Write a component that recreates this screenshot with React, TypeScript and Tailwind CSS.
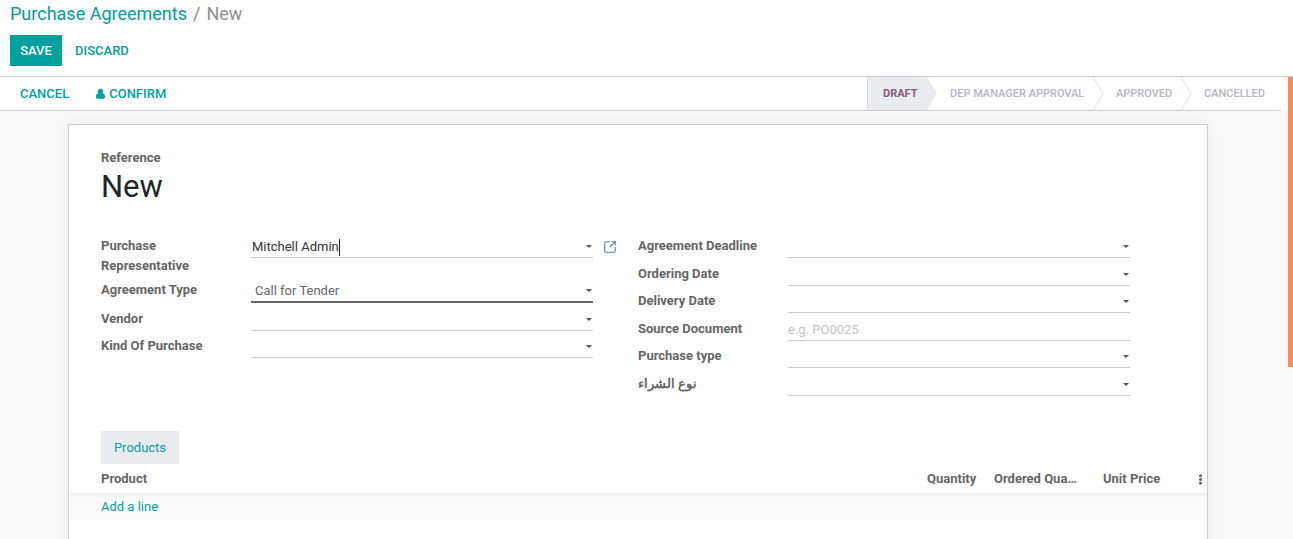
import React from "react"
import { FaEllipsisV } from "react-icons/fa"
import { SquareArrowOutUpRight } from "lucide-react"

function Caret() {
  return (
    <span className="flex h-[20px] items-center pb-[2px]">
      <span className="h-0 w-0 border-x-[3px] border-t-[3px] border-x-transparent border-t-[#555]" />
    </span>
  )
}

// one label + underlined field, rows have their own heights as in the form view
function Row({ label, height, children, extra, caret = true, dark = false, twoLines = false }: {
  label: string
  height: string
  children?: React.ReactNode
  extra?: React.ReactNode
  caret?: boolean
  dark?: boolean
  twoLines?: boolean
}) {
  return (
    <div className={`flex ${height}`}>
      <div className={`flex w-[150px] shrink-0 pr-4 text-[13px] leading-[20px] font-bold text-[#666] ${twoLines ? "items-start" : dark ? "items-end pb-[3px]" : "items-end pb-[2px]"}`}>
        {label}
      </div>
      <div className={`flex w-[342px] shrink-0 items-end justify-between pr-[1px] ${twoLines ? "h-[22px]" : "h-full"} ${dark ? "border-b-2 border-[#666]" : "border-b border-[#ccc]"}`}>
        <div className="flex h-[20px] items-center text-[13px] text-[#444]">{children}</div>
        {caret && <Caret />}
      </div>
      {extra}
    </div>
  )
}

function Step({ label, width, pad, active = false, arrow = true }: {
  label: string
  width: string
  pad: string
  active?: boolean
  arrow?: boolean
}) {
  return (
    <div className={`relative flex h-full items-center pt-[1px] text-[11px] ${width} ${pad} ${active ? "border-l border-[#d5d8dc] bg-[#e9ecef] font-bold text-[#875a7b]" : "font-medium text-[#b1b7c4]"}`}>
      {label}
      {arrow && (
        <svg className="absolute top-0 left-full z-10" width="11" height="33" viewBox="0 0 11 33">
          <path d="M0 0 L10 16.5 L0 33" fill={active ? "#e9ecef" : "#fff"} stroke={active ? "none" : "#dcdfe3"} />
        </svg>
      )}
    </div>
  )
}

export default function App() {
  return (
    <div className="h-[539px] w-[1293px] overflow-hidden bg-white font-['Roboto',sans-serif]">
      {/* control panel */}
      <div className="h-[77px] border-b border-[#ccc] px-[10px] pt-[3px]">
        <div className="flex h-[22px] items-center text-[18px] leading-[22px]">
          <span className="text-[#00a09d]">Purchase Agreements</span>
          <span className="mx-[6px] text-[#888]">/</span>
          <span className="text-[#8f8f8f]">New</span>
        </div>
        <div className="mt-[10px] flex items-center">
          <div className="flex h-[31px] w-[52px] items-center justify-center bg-[#00a09d] text-[13px] font-medium text-white">SAVE</div>
          <div className="ml-[13px] text-[13px] font-medium text-[#00a09d]">DISCARD</div>
        </div>
      </div>

      <div className="flex h-[462px] bg-[#f9f9f9]">
        <div className="h-full w-[1288px] shrink-0 overflow-hidden">
          {/* status bar */}
          <div className="bg-white pr-[7px]">
            <div className="flex h-[34px] items-center justify-between border-b border-[#ccc]">
              <div className="flex items-center pl-[20px] text-[13px] font-medium text-[#00a09d]">
                <span>CANCEL</span>
                <svg className="mr-[4px] ml-[27px]" width="9" height="12" viewBox="0 0 10 12">
                  <circle cx="5" cy="3.2" r="2.9" fill="currentColor" />
                  <path d="M0 9.2C0 6.6 1 5.4 2.6 5.2C3.2 5.9 4 6.3 5 6.3C6 6.3 6.8 5.9 7.4 5.2C9 5.4 10 6.6 10 9.2C10 10.6 9 11.3 8 11.3H2C1 11.3 0 10.6 0 9.2Z" fill="currentColor" />
                </svg>
                <span>CONFIRM</span>
              </div>
              <div className="flex h-full">
                <Step label="DRAFT" width="w-[60px]" pad="pl-[15px]" active />
                <Step label="DEP MANAGER APPROVAL" width="w-[166px]" pad="pl-[23px]" />
                <Step label="APPROVED" width="w-[88px]" pad="pl-[23px]" />
                <Step label="CANCELLED" width="w-[100px]" pad="pl-[23px]" arrow={false} />
              </div>
            </div>
          </div>

          {/* sheet */}
          <div className="mt-[13px] ml-[68px] h-[500px] w-[1140px] border border-[#ccc] bg-white pt-[26px] shadow-[0_0_12px_rgba(0,0,0,0.07)]">
            <div className="px-[32px]">
              <div className="text-[13px] leading-[14px] font-bold text-[#666]">Reference</div>
              <div className="mt-[3px] text-[31px] leading-[38px] text-[#212529]">New</div>

              <div className="mt-[30px] flex">
                <div className="w-[537px]">
                  <Row
                    label="Purchase Representative"
                    height="h-[44px]"
                    twoLines
                    extra={<SquareArrowOutUpRight className="mt-[4px] ml-[10px] text-[#4f8796]" size={14} strokeWidth={1.9} />}
                  >
                    <span className="pl-[1px] text-[#333]">Mitchell Admin</span>
                    <span className="h-[17px] w-px bg-[#222]" />
                  </Row>
                  <Row label="Agreement Type" height="h-[23px]" dark>
                    <span className="pl-[4px] text-[#666]">Call for Tender</span>
                  </Row>
                  <Row label="Vendor" height="h-[28px]" />
                  <Row label="Kind Of Purchase" height="h-[27px]" />
                </div>
                <div>
                  <Row label="Agreement Deadline" height="h-[22px]" />
                  <Row label="Ordering Date" height="h-[28px]" />
                  <Row label="Delivery Date" height="h-[27px]" />
                  <Row label="Source Document" height="h-[28px]" caret={false}>
                    <span className="text-[#c4c4c4]">e.g. PO0025</span>
                  </Row>
                  <Row label="Purchase type" height="h-[27px]" />
                  <Row label="نوع الشراء" height="h-[28px]" />
                </div>
              </div>

              {/* tabs */}
              <div className="mt-[35px] flex h-[33px] w-[78px] items-center justify-center bg-[#e9ecef] text-[13px] text-[#00a09d]">Products</div>
            </div>

            {/* lines table */}
            <div className="flex h-[29px] items-center pt-[1px] pr-[1px] pl-[32px] text-[13px] font-bold text-[#666]">
              <div className="flex-1">Product</div>
              <div className="w-[67px]">Quantity</div>
              <div className="mr-[24px] w-[85px] truncate">Ordered Quantity</div>
              <div className="w-[92px]">Unit Price</div>
              <FaEllipsisV className="text-[11px]" />
            </div>
            <div className="flex h-[27px] items-center bg-[#fbfbfb] pl-[32px] text-[13px] text-[#00a09d] shadow-[inset_0_6px_6px_-6px_rgba(0,0,0,0.1)]">
              Add a line
            </div>
          </div>
        </div>
        <div className="h-[290px] w-[5px] bg-[#f58d62]" />
      </div>
    </div>
  )
}
